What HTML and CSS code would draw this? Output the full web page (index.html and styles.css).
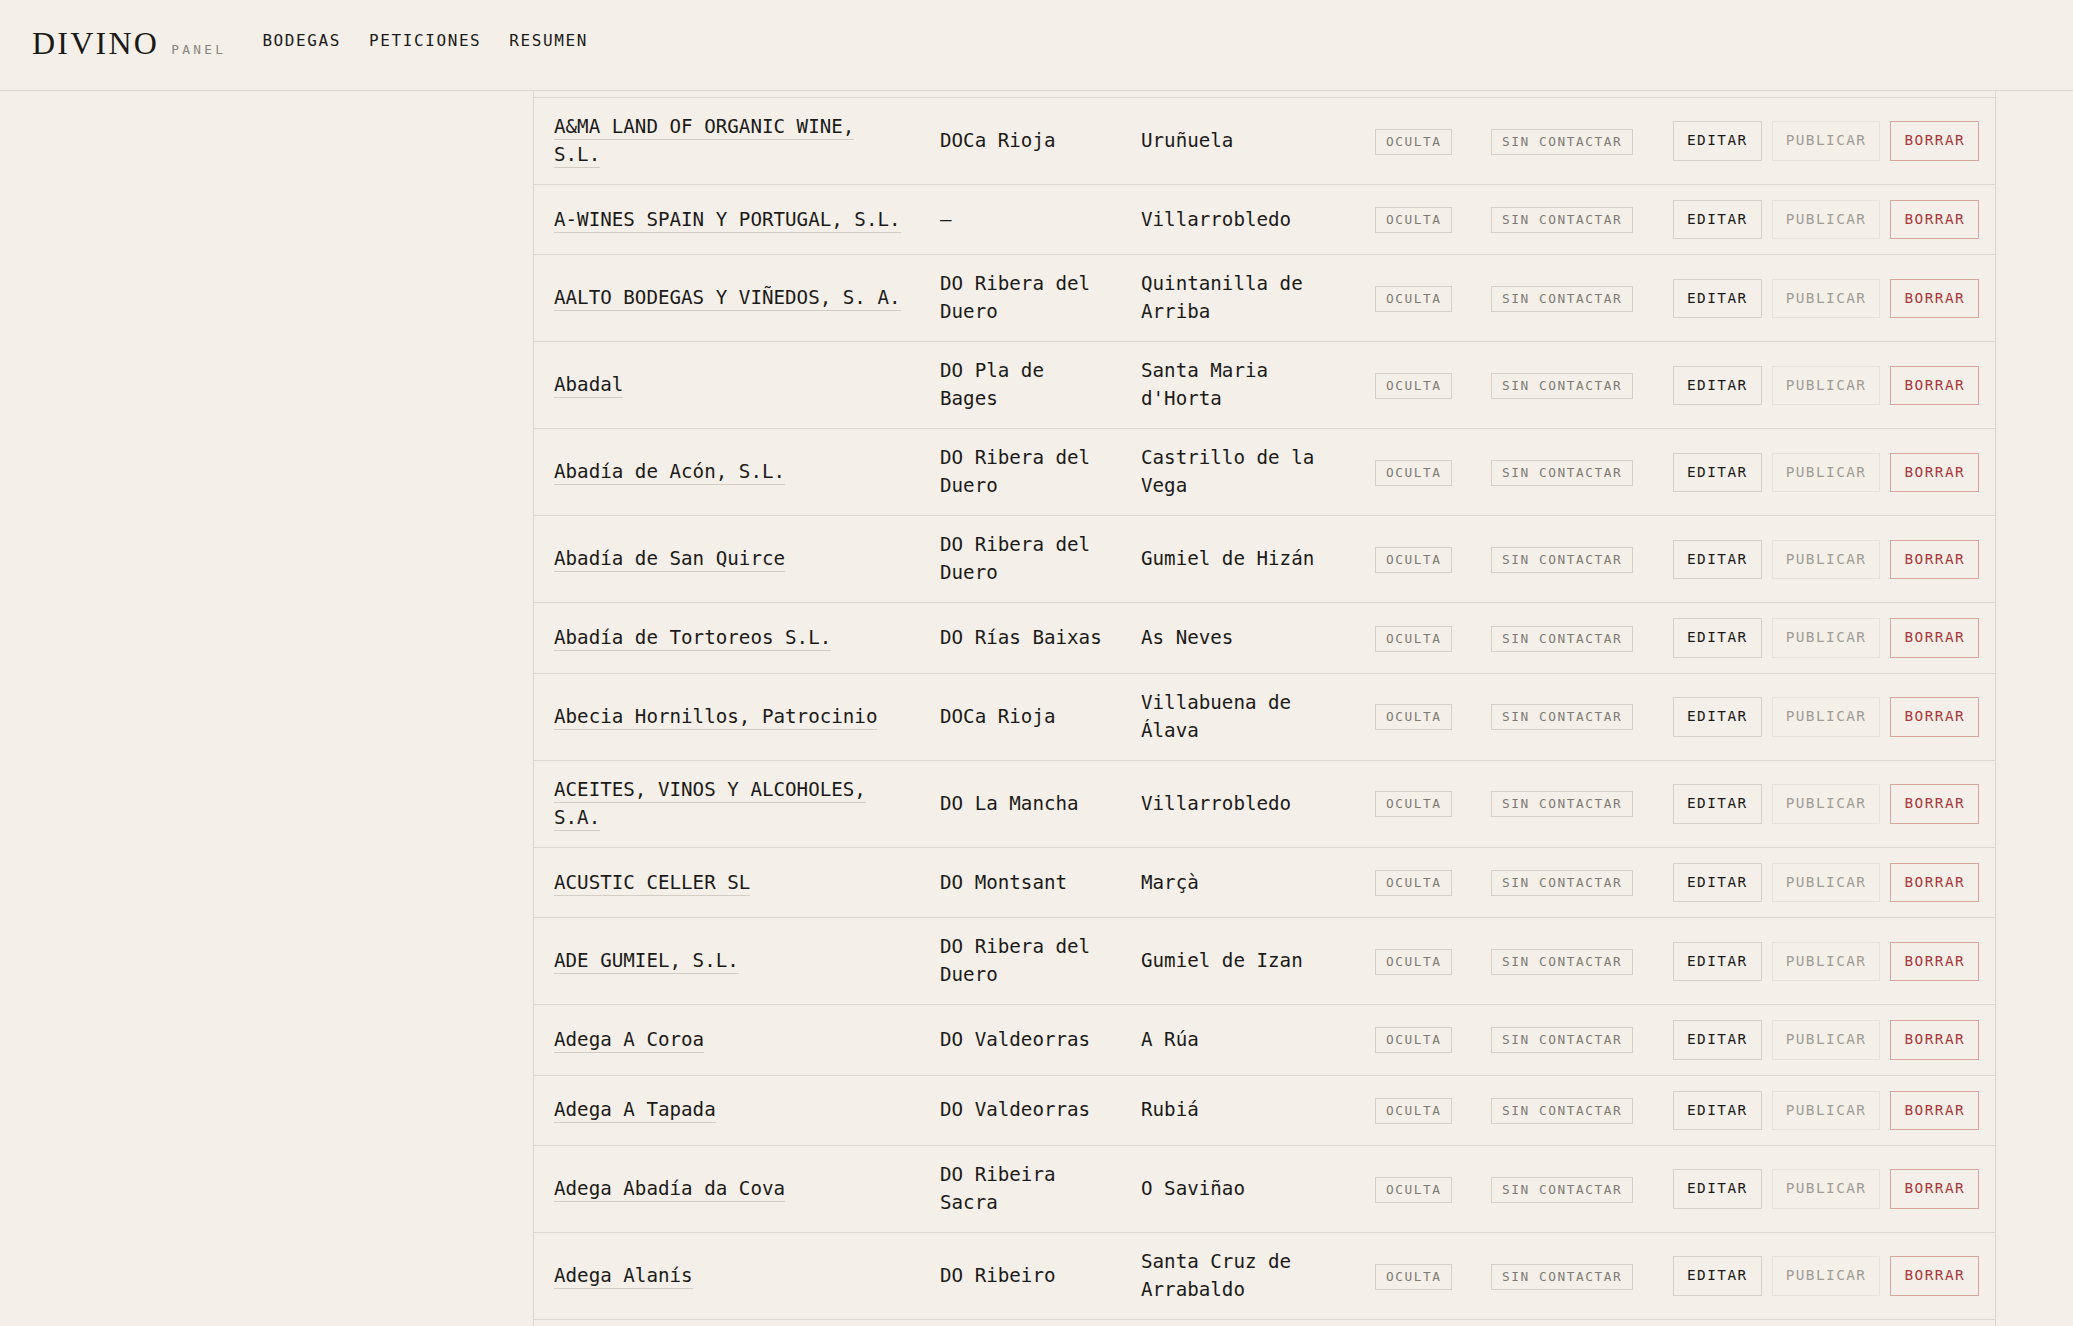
FILE: index.html
```html
<!DOCTYPE html>
<html lang="es">
<head>
    <meta charset="utf-8" />
    <meta name="viewport" content="width=device-width, initial-scale=1.0">
    <title>Divino - Panel</title>
    <link rel="stylesheet" href="styles.css">
</head>
<body>
<header class="topbar">
    <div class="brand">
        <span class="brand-name">DIVINO</span>
        <span class="brand-tag">PANEL</span>
    </div>
    <nav class="nav">
        <a href="#">BODEGAS</a>
        <a href="#">PETICIONES</a>
        <a href="#">RESUMEN</a>
    </nav>
</header>

<div class="layout">
    <aside class="side"></aside>

    <main class="list">
        <div class="row-tail"></div>

        <div class="row">
            <div class="cell"><a class="name" href="#">A&amp;MA LAND OF ORGANIC WINE, S.L.</a></div>
            <div class="cell">DOCa Rioja</div>
            <div class="cell">Uruñuela</div>
            <div class="cell"><span class="badge">OCULTA</span></div>
            <div class="cell"><span class="badge">SIN CONTACTAR</span></div>
            <div class="cell actions"><button class="btn">EDITAR</button><button class="btn btn-muted">PUBLICAR</button><button class="btn btn-danger">BORRAR</button></div>
        </div>

        <div class="row">
            <div class="cell"><a class="name" href="#">A-WINES SPAIN Y PORTUGAL, S.L.</a></div>
            <div class="cell">—</div>
            <div class="cell">Villarrobledo</div>
            <div class="cell"><span class="badge">OCULTA</span></div>
            <div class="cell"><span class="badge">SIN CONTACTAR</span></div>
            <div class="cell actions"><button class="btn">EDITAR</button><button class="btn btn-muted">PUBLICAR</button><button class="btn btn-danger">BORRAR</button></div>
        </div>

        <div class="row">
            <div class="cell"><a class="name" href="#">AALTO BODEGAS Y VIÑEDOS, S. A.</a></div>
            <div class="cell">DO Ribera del Duero</div>
            <div class="cell">Quintanilla de Arriba</div>
            <div class="cell"><span class="badge">OCULTA</span></div>
            <div class="cell"><span class="badge">SIN CONTACTAR</span></div>
            <div class="cell actions"><button class="btn">EDITAR</button><button class="btn btn-muted">PUBLICAR</button><button class="btn btn-danger">BORRAR</button></div>
        </div>

        <div class="row">
            <div class="cell"><a class="name" href="#">Abadal</a></div>
            <div class="cell">DO Pla de Bages</div>
            <div class="cell">Santa Maria d'Horta</div>
            <div class="cell"><span class="badge">OCULTA</span></div>
            <div class="cell"><span class="badge">SIN CONTACTAR</span></div>
            <div class="cell actions"><button class="btn">EDITAR</button><button class="btn btn-muted">PUBLICAR</button><button class="btn btn-danger">BORRAR</button></div>
        </div>

        <div class="row">
            <div class="cell"><a class="name" href="#">Abadía de Acón, S.L.</a></div>
            <div class="cell">DO Ribera del Duero</div>
            <div class="cell">Castrillo de la Vega</div>
            <div class="cell"><span class="badge">OCULTA</span></div>
            <div class="cell"><span class="badge">SIN CONTACTAR</span></div>
            <div class="cell actions"><button class="btn">EDITAR</button><button class="btn btn-muted">PUBLICAR</button><button class="btn btn-danger">BORRAR</button></div>
        </div>

        <div class="row">
            <div class="cell"><a class="name" href="#">Abadía de San Quirce</a></div>
            <div class="cell">DO Ribera del Duero</div>
            <div class="cell">Gumiel de Hizán</div>
            <div class="cell"><span class="badge">OCULTA</span></div>
            <div class="cell"><span class="badge">SIN CONTACTAR</span></div>
            <div class="cell actions"><button class="btn">EDITAR</button><button class="btn btn-muted">PUBLICAR</button><button class="btn btn-danger">BORRAR</button></div>
        </div>

        <div class="row">
            <div class="cell"><a class="name" href="#">Abadía de Tortoreos S.L.</a></div>
            <div class="cell">DO Rías Baixas</div>
            <div class="cell">As Neves</div>
            <div class="cell"><span class="badge">OCULTA</span></div>
            <div class="cell"><span class="badge">SIN CONTACTAR</span></div>
            <div class="cell actions"><button class="btn">EDITAR</button><button class="btn btn-muted">PUBLICAR</button><button class="btn btn-danger">BORRAR</button></div>
        </div>

        <div class="row">
            <div class="cell"><a class="name" href="#">Abecia Hornillos, Patrocinio</a></div>
            <div class="cell">DOCa Rioja</div>
            <div class="cell">Villabuena de Álava</div>
            <div class="cell"><span class="badge">OCULTA</span></div>
            <div class="cell"><span class="badge">SIN CONTACTAR</span></div>
            <div class="cell actions"><button class="btn">EDITAR</button><button class="btn btn-muted">PUBLICAR</button><button class="btn btn-danger">BORRAR</button></div>
        </div>

        <div class="row">
            <div class="cell"><a class="name" href="#">ACEITES, VINOS Y ALCOHOLES, S.A.</a></div>
            <div class="cell">DO La Mancha</div>
            <div class="cell">Villarrobledo</div>
            <div class="cell"><span class="badge">OCULTA</span></div>
            <div class="cell"><span class="badge">SIN CONTACTAR</span></div>
            <div class="cell actions"><button class="btn">EDITAR</button><button class="btn btn-muted">PUBLICAR</button><button class="btn btn-danger">BORRAR</button></div>
        </div>

        <div class="row">
            <div class="cell"><a class="name" href="#">ACUSTIC CELLER SL</a></div>
            <div class="cell">DO Montsant</div>
            <div class="cell">Marçà</div>
            <div class="cell"><span class="badge">OCULTA</span></div>
            <div class="cell"><span class="badge">SIN CONTACTAR</span></div>
            <div class="cell actions"><button class="btn">EDITAR</button><button class="btn btn-muted">PUBLICAR</button><button class="btn btn-danger">BORRAR</button></div>
        </div>

        <div class="row">
            <div class="cell"><a class="name" href="#">ADE GUMIEL, S.L.</a></div>
            <div class="cell">DO Ribera del Duero</div>
            <div class="cell">Gumiel de Izan</div>
            <div class="cell"><span class="badge">OCULTA</span></div>
            <div class="cell"><span class="badge">SIN CONTACTAR</span></div>
            <div class="cell actions"><button class="btn">EDITAR</button><button class="btn btn-muted">PUBLICAR</button><button class="btn btn-danger">BORRAR</button></div>
        </div>

        <div class="row">
            <div class="cell"><a class="name" href="#">Adega A Coroa</a></div>
            <div class="cell">DO Valdeorras</div>
            <div class="cell">A Rúa</div>
            <div class="cell"><span class="badge">OCULTA</span></div>
            <div class="cell"><span class="badge">SIN CONTACTAR</span></div>
            <div class="cell actions"><button class="btn">EDITAR</button><button class="btn btn-muted">PUBLICAR</button><button class="btn btn-danger">BORRAR</button></div>
        </div>

        <div class="row">
            <div class="cell"><a class="name" href="#">Adega A Tapada</a></div>
            <div class="cell">DO Valdeorras</div>
            <div class="cell">Rubiá</div>
            <div class="cell"><span class="badge">OCULTA</span></div>
            <div class="cell"><span class="badge">SIN CONTACTAR</span></div>
            <div class="cell actions"><button class="btn">EDITAR</button><button class="btn btn-muted">PUBLICAR</button><button class="btn btn-danger">BORRAR</button></div>
        </div>

        <div class="row">
            <div class="cell"><a class="name" href="#">Adega Abadía da Cova</a></div>
            <div class="cell">DO Ribeira Sacra</div>
            <div class="cell">O Saviñao</div>
            <div class="cell"><span class="badge">OCULTA</span></div>
            <div class="cell"><span class="badge">SIN CONTACTAR</span></div>
            <div class="cell actions"><button class="btn">EDITAR</button><button class="btn btn-muted">PUBLICAR</button><button class="btn btn-danger">BORRAR</button></div>
        </div>

        <div class="row">
            <div class="cell"><a class="name" href="#">Adega Alanís</a></div>
            <div class="cell">DO Ribeiro</div>
            <div class="cell">Santa Cruz de Arrabaldo</div>
            <div class="cell"><span class="badge">OCULTA</span></div>
            <div class="cell"><span class="badge">SIN CONTACTAR</span></div>
            <div class="cell actions"><button class="btn">EDITAR</button><button class="btn btn-muted">PUBLICAR</button><button class="btn btn-danger">BORRAR</button></div>
        </div>

        <div class="row-tail row-tail-end"></div>
    </main>
</div>
</body>
</html>
```

FILE: styles.css
```css
body {
    margin: 0;
    background-color: #f4f0e9;
    color: #1c1a18;
    font-family: "DejaVu Sans Mono", "Liberation Mono", monospace;
    overflow: hidden;
}

/* header */
.topbar {
    height: 90px;
    border-bottom: 1px solid #dcd6ce;
    display: flex;
    align-items: center;
    padding: 0 32px;
    gap: 36px;
}

.brand {
    display: flex;
    align-items: baseline;
    gap: 12px;
    padding-bottom: 4px;
}

.brand-name {
    font-family: "Liberation Serif", "Times New Roman", serif;
    font-size: 32px;
    letter-spacing: 0.07em;
    color: #1a1917;
}

.brand-tag {
    font-size: 12.8px;
    letter-spacing: 0.26em;
    color: #8a857e;
}

.nav {
    display: flex;
    gap: 28px;
    padding-bottom: 10px;
}

.nav a {
    color: #1c1a18;
    text-decoration: none;
    font-size: 16px;
    letter-spacing: 0.1em;
}

/* list */
.layout {
    display: grid;
    grid-template-columns: 533px 1463px 1fr;
}

.list {
    border-left: 1px solid #dcd6ce;
    border-right: 1px solid #dcd6ce;
}

.row-tail {
    height: 6px;
    border-bottom: 1px solid #dcd6ce;
}

.row-tail-end {
    height: 40px;
    border-bottom: none;
}

.row {
    display: grid;
    grid-template-columns: 386px 201px 234px 116px 182px 1fr;
    align-items: center;
    border-bottom: 1px solid #dcd6ce;
    font-size: 19.2px;
    line-height: 28px;
}

.cell {
    padding: 15px 12px 15px 20px;
}

.name {
    color: #1c1a18;
    text-decoration: none;
    border-bottom: 1px solid #d3cdc5;
    padding-bottom: 1px;
}

.badge {
    display: inline-block;
    vertical-align: middle;
    font-size: 12.8px;
    line-height: 16px;
    letter-spacing: 0.12em;
    padding: 4px 10px;
    border: 1px solid #d5cfc7;
    color: #7f7a73;
}

.actions {
    display: flex;
    gap: 10px;
}

.btn {
    font-family: inherit;
    font-size: 14.4px;
    line-height: 17.4px;
    letter-spacing: 0.1em;
    padding: 10px 13px;
    background: transparent;
    border: 1px solid #d6d0c8;
    color: #1a1917;
    cursor: pointer;
}

.btn-muted {
    border-color: #e6e1da;
    color: #a19c96;
}

.btn-danger {
    border-color: #d9a69e;
    color: #a8383b;
}
```
